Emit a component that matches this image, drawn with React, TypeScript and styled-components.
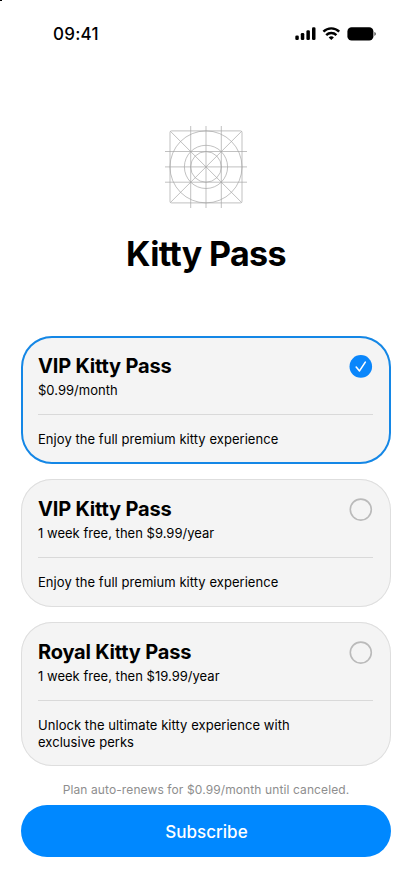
import React, { useState } from "react";
import styled, { createGlobalStyle } from "styled-components";

const GlobalStyle = createGlobalStyle`
  *, *::before, *::after { box-sizing: border-box; }
  body { margin: 0; background: #fff; }
  button { font: inherit; border: 0; padding: 0; margin: 0; cursor: pointer; }
`;

const Screen = styled.main`
  position: relative;
  width: 412px;
  height: 896px;
  overflow: hidden;
  display: flex;
  flex-direction: column;
  background: #fff;
  color: #000;
  font-family: Inter, "Liberation Sans", sans-serif;
`;

const ScreenCorner = styled.span`
  position: absolute;
  top: 0;
  left: 0;
  width: 2px;
  height: 1px;
  background: #000;
`;

const StatusBar = styled.header`
  display: flex;
  justify-content: space-between;
  align-items: center;
  height: 68px;
  padding: 0 36px 0 53px;
`;

const Clock = styled.time`
  font-size: 17px;
  line-height: 20px;
  font-weight: 550;
  letter-spacing: 0.25px;
`;

const StatusIcons = styled.svg`
  display: block;
  width: 81px;
  height: 16px;
`;

const Hero = styled.section`
  display: flex;
  flex-direction: column;
  align-items: center;
  height: 268px;
  padding-top: 57px;
`;

const AppGlyph = styled.svg`
  display: block;
  width: 84px;
  height: 84px;
`;

const Heading = styled.h1`
  margin: 24px 0 0;
  font-size: 34px;
  line-height: 41px;
  font-weight: 700;
  letter-spacing: -0.65px;
`;

const PlanList = styled.div`
  display: flex;
  flex-direction: column;
  gap: 15px;
  padding: 0 21px;
`;

const PlanCard = styled.button<{ $selected: boolean; $tall?: boolean }>`
  display: flex;
  flex-direction: column;
  height: ${(p) => (p.$tall ? 144 : 128)}px;
  padding: 17px 18px 0 17px;
  border-radius: 31px;
  background: #f4f4f4;
  box-shadow: inset 0 0 0 ${(p) => (p.$selected ? "2px #1487e6" : "1px #dedede")};
  color: #000;
  text-align: left;
`;

const PlanTop = styled.span`
  display: flex;
  justify-content: space-between;
  align-items: flex-start;
  height: 62px;
  border-bottom: 1px solid #d9d9d9;
`;

const PlanName = styled.span`
  display: block;
  padding-top: 1px;
  font-size: 20px;
  line-height: 25px;
  font-weight: 700;
  letter-spacing: -0.19px;
`;

const PlanText = styled.span`
  display: block;
  font-size: 13px;
  line-height: 16.5px;
  letter-spacing: 0.05px;
`;

const PlanPrice = styled(PlanText)`
  margin-top: 3px;
  letter-spacing: 0.02px;
`;

const PlanDescription = styled(PlanText)`
  margin-top: 16px;
  max-width: 280px;
`;

const Marker = styled.svg`
  display: block;
  width: 24px;
  height: 24px;
  margin: 1px 0 0;
`;

const Footer = styled.footer`
  display: flex;
  flex-direction: column;
  padding: 16px 21px 0;
`;

const RenewalNote = styled.p`
  margin: 0;
  font-size: 12px;
  line-height: 16px;
  letter-spacing: 0.11px;
  color: #8e8e8e;
  text-align: center;
`;

const SubscribeButton = styled.button`
  height: 52.5px;
  margin-top: 6.5px;
  padding: 2px 0 0 1px;
  border-radius: 27px;
  background: #0088ff;
  color: #fff;
  font-size: 17px;
  line-height: 22px;
  font-weight: 500;
`;

const plans = [
  { id: "monthly", name: "VIP Kitty Pass", price: "$0.99/month", text: "Enjoy the full premium kitty experience" },
  { id: "yearly", name: "VIP Kitty Pass", price: "1 week free, then $9.99/year", text: "Enjoy the full premium kitty experience" },
  { id: "royal", name: "Royal Kitty Pass", price: "1 week free, then $19.99/year", text: "Unlock the ultimate kitty experience with exclusive perks", tall: true },
];

function SelectionMark({ selected }: { selected: boolean }) {
  return (
    <Marker viewBox="0 0 24 24" fill="none">
      {selected ? (
        <>
          <circle cx="11.8" cy="12.4" r="11.3" fill="#0a86fb" />
          <path d="M7.2 13.1 10.5 16.9 16.3 8.1" stroke="#fff" strokeWidth="1.6" strokeLinecap="round" strokeLinejoin="round" />
        </>
      ) : (
        <circle cx="11.8" cy="12.6" r="10.5" stroke="#bababa" strokeWidth="1.6" />
      )}
    </Marker>
  );
}

export default function App() {
  const [selected, setSelected] = useState("monthly");
  return (
    <>
      <GlobalStyle />
      <Screen>
        <ScreenCorner />
        <StatusBar>
          <Clock>09:41</Clock>
          <StatusIcons viewBox="0 0 81 16">
            <rect x="0.3" y="9.4" width="3.5" height="4.6" rx="1.3" />
            <rect x="5.8" y="7" width="3.5" height="7" rx="1.3" />
            <rect x="11.4" y="4.2" width="3.5" height="9.8" rx="1.3" />
            <rect x="17" y="1.2" width="3.5" height="12.8" rx="1.3" />
            <g fill="none" stroke="#000" strokeWidth="2.4">
              <path d="M28.4 5.6a11.2 11.2 0 0 1 15.8 0" />
              <path d="M31.2 9.1a7.2 7.2 0 0 1 10.2 0" />
            </g>
            <path d="M33.7 11.5a3.8 3.8 0 0 1 5.2 0l-2.6 2.6z" />
            <rect x="52.4" y="1.2" width="26" height="13.4" rx="4.2" />
            <path d="M79.4 6.1v3.8c1.9-.7 1.9-3.1 0-3.8z" opacity=".7" />
          </StatusIcons>
        </StatusBar>
        <Hero>
          <AppGlyph viewBox="0 0 84 84" fill="none" stroke="#a6a6a6" strokeWidth="0.7">
            <rect x="6" y="5.9" width="72" height="72" rx="1.5" />
            <circle cx="42" cy="41.9" r="36" />
            <circle cx="42" cy="41.9" r="21.6" />
            <circle cx="42" cy="41.9" r="15.3" />
            <path d="M6.5 6.4l71 71M77.5 6.4l-71 71M26.7 1v82M42 1v82M57.3 1v82M1 26.5h82M1 41.9h82M1 57.2h82" />
          </AppGlyph>
          <Heading>Kitty Pass</Heading>
        </Hero>
        <PlanList role="radiogroup">
          {plans.map((plan) => (
            <PlanCard
              key={plan.id}
              role="radio"
              aria-checked={selected === plan.id}
              $selected={selected === plan.id}
              $tall={plan.tall}
              onClick={() => setSelected(plan.id)}
            >
              <PlanTop>
                <span>
                  <PlanName>{plan.name}</PlanName>
                  <PlanPrice>{plan.price}</PlanPrice>
                </span>
                <SelectionMark selected={selected === plan.id} />
              </PlanTop>
              <PlanDescription>{plan.text}</PlanDescription>
            </PlanCard>
          ))}
        </PlanList>
        <Footer>
          <RenewalNote>Plan auto-renews for $0.99/month until canceled.</RenewalNote>
          <SubscribeButton>Subscribe</SubscribeButton>
        </Footer>
      </Screen>
    </>
  );
}
